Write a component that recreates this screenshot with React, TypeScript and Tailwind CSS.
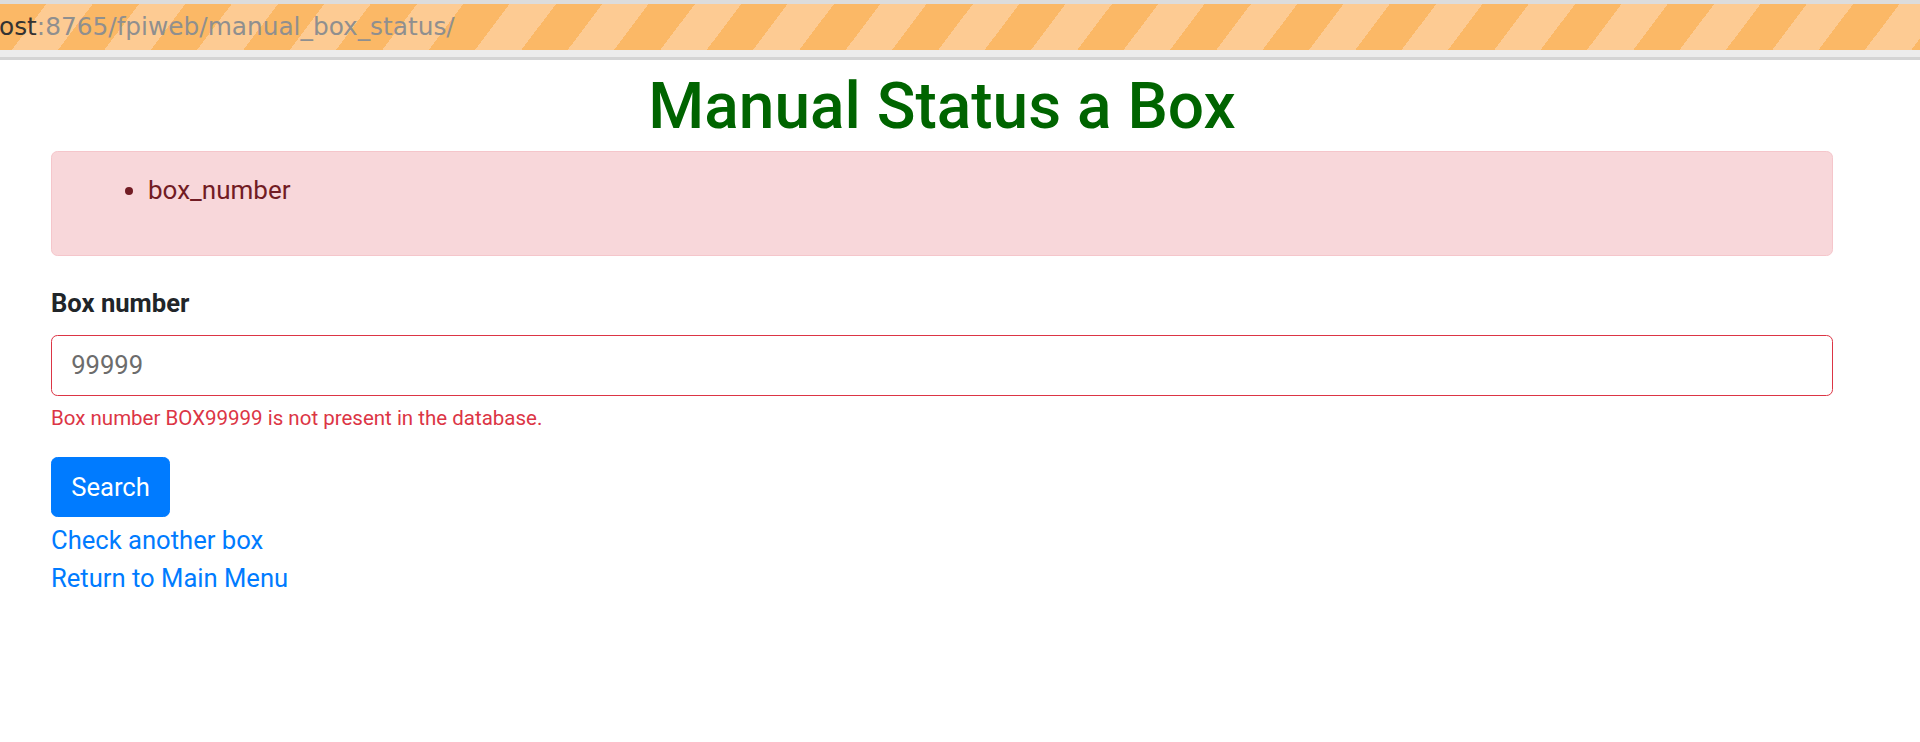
import React from "react";

// Browser URL strip shown at the top of the screenshot
function UrlStrip() {
  return (
    <div className="border-t-4 border-[#dcdcdc]">
      <div className="h-[46px] flex items-center overflow-hidden bg-[repeating-linear-gradient(127deg,#fbb866_0px,#fbb866_37px,#fdcb93_37px,#fdcb93_74px)] font-['DejaVu_Sans',sans-serif] text-[24.8px] whitespace-nowrap">
        <span className="text-[#333333] -ml-[1px]">ost</span>
        <span className="text-[#8f8f8f]">:8765/fpiweb/manual_box_status/</span>
      </div>
      <div className="h-[7px] bg-[#ececec]" />
      <div className="h-[3px] bg-[#d4d4d4]" />
    </div>
  );
}

export default function App() {
  return (
    <div className="min-h-[742px] bg-white font-['Roboto',sans-serif] text-[25.6px] leading-[1.5] text-[#212529]">
      <UrlStrip />
      <main className="pl-[51px] pr-[87px] pt-[9px]">
        <h1 className="text-center text-[64px] font-medium leading-[1.2] text-[#006400] mb-[5px]">
          Manual Status a Box
        </h1>

        <div className="rounded-[6.4px] border-[1.6px] border-[#f5c6cb] bg-[#f8d7da] text-[#721c24] px-[32px] py-[19.2px] mb-[28px]">
          <ul className="list-disc pl-[64px] mb-[25.6px] text-[26px]">
            <li>box_number</li>
          </ul>
        </div>

        <form>
          <div className="mb-[23px]">
            <label className="block font-bold mb-[12.8px]">Box number</label>
            <input
              type="text"
              defaultValue="99999"
              className="block w-full h-[60.8px] px-[19.2px] py-[9.6px] rounded-[6.4px] border-[1.6px] border-[#dc3545] text-[#6c6c6c] bg-white outline-none"
            />
            <div className="mt-[7.5px] text-[20.5px] text-[#dc3545]">
              Box number BOX99999 is not present in the database.
            </div>
          </div>
          <button
            type="button"
            className="rounded-[6.4px] bg-[#007bff] text-white px-[19.2px] py-[9.6px] border-[1.6px] border-[#007bff] leading-[1.5]"
          >
            Search
          </button>
        </form>
        <div className="flex flex-col items-start mt-[4px]">
          <a href="#" className="text-[#007bff]">Check another box</a>
          <a href="#" className="text-[#007bff]">Return to Main Menu</a>
        </div>
      </main>
    </div>
  );
}
